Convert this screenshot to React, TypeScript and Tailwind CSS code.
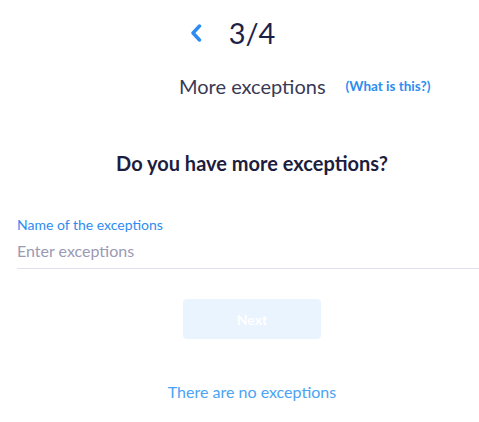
export default function App() {
  return (
    <div className="w-[479px] h-[422px] bg-white overflow-hidden" style={{ fontFamily: "Lato, 'Open Sans', sans-serif" }}>
      <div className="flex items-center justify-center h-[36px] mt-[14px] gap-[27px] pr-[14px]">
        <svg width="12" height="18" viewBox="0 0 12 18" className="mt-[1px]">
          <path d="M9.5 2 L3 9 L9.5 16" fill="none" stroke="#2d8cf0" strokeWidth="3.4" strokeLinecap="round" strokeLinejoin="round" />
        </svg>
        <span className="text-[29px] leading-none text-[#1e1f45]">3/4</span>
      </div>
      <div className="flex items-center mt-[21px] h-[30px]">
        <span className="ml-[179px] text-[20px] text-[#3a3a55]">More exceptions</span>
        <span className="ml-[20px] text-[13.5px] font-bold text-[#2d8cf0]">(What is this?)</span>
      </div>
      <div className="mt-[48px] text-center text-[20px] font-bold text-[#1d1d40] leading-[28px] pl-[25px]">Do you have more exceptions?</div>
      <div className="mt-[39px] pl-[17px]">
        <div className="text-[14px] text-[#2d8cf0] leading-[17px]">Name of the exceptions</div>
        <input
          placeholder="Enter exceptions"
          className="mt-[6px] w-full h-[30px] pb-[6px] text-[16px] text-[#1d1d40] placeholder:text-[#9b99b3] border-b border-[#e2e0f0] outline-none bg-transparent"
        />
      </div>
      <div className="flex justify-center mt-[30px] pl-[25px]">
        <button className="w-[138px] h-[40px] rounded-[4px] bg-[#eaf4ff] text-white font-bold text-[14px]">Next</button>
      </div>
      <div className="mt-[41px] text-center text-[16px] text-[#4aa3f5] pl-[25px]">There are no exceptions</div>
    </div>
  );
}
